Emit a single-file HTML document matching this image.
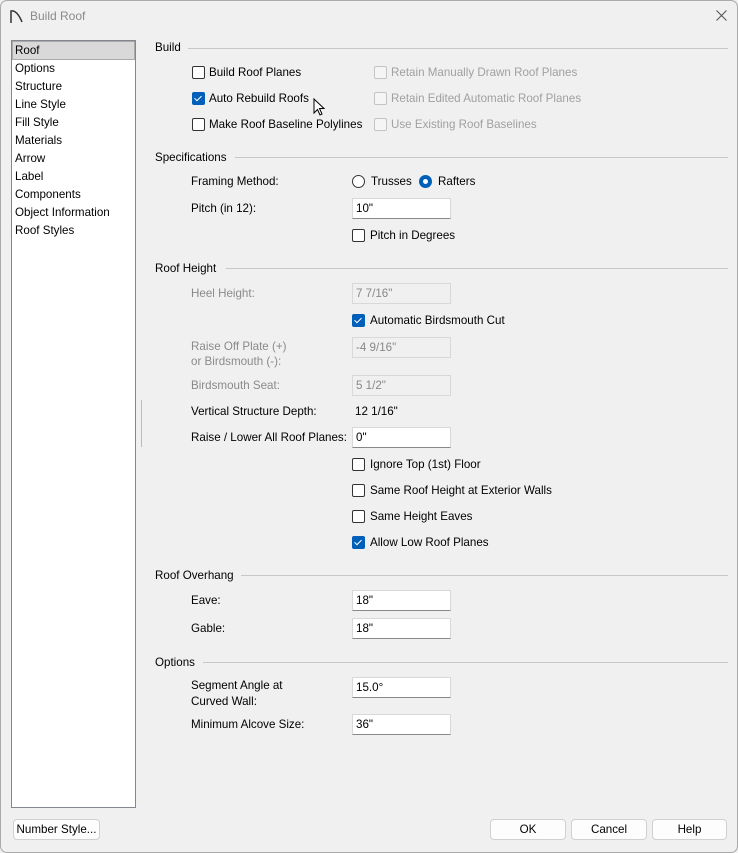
<!DOCTYPE html><html><head><style>
body{margin:0;width:738px;height:853px;background:#f0f0f0;font-family:"Liberation Sans",sans-serif;font-size:11.6px;color:#000;position:relative;overflow:hidden}
.a{position:absolute;white-space:nowrap}
.win{position:absolute;left:0;top:0;width:736px;height:851px;border:1px solid #aaa;border-radius:7px}
.list{position:absolute;left:11px;top:40px;width:123px;height:766px;background:#fff;border:1px solid #828790}
.list div{height:18px;line-height:18px;padding-left:3px}
.hd{position:absolute;left:155px;height:1px;background:#c8c8c8;}
.cb{position:absolute;width:11px;height:11px;border:1px solid #333;border-radius:2px;background:#fff}
.cb.on{background:#005fb8;border-color:#005fb8}
.cb.on:after{content:"";position:absolute;left:3px;top:1px;width:3px;height:6px;border:solid #fff;border-width:0 1.5px 1.5px 0;transform:rotate(45deg)}
.cb.dis{border-color:#c4c4c4;background:#f5f5f5}
.in{position:absolute;left:352px;width:94px;height:19px;border:1px solid #d8d8d8;border-bottom:1px solid #888;background:#fff;padding-left:3px;line-height:19px}
.in.dis{background:#f0f0f0;border-color:#d8d8d8;color:#888}
.g{color:#8a8a8a}.dg{color:#a0a0a0}
.btn{position:absolute;top:819px;height:19px;border:1px solid #d0d0d0;border-radius:4px;background:#fdfdfd;text-align:center;line-height:19px}
</style></head><body>
<div class="win"></div>
<svg class="a" style="left:9px;top:8px" width="16" height="16"><path d="M2 15 V3 Q8 2 13 14" fill="none" stroke="#333" stroke-width="1.5"/></svg>
<div class="a g" style="left:30px;top:9px;font-size:12px">Build Roof</div>
<svg class="a" style="left:716px;top:10px" width="11" height="11"><path d="M0.5 0.5 L10.5 10.5 M10.5 0.5 L0.5 10.5" stroke="#555" stroke-width="1.1"/></svg>
<div class="list">
<div style="background:#d9d9d9;border:1px solid #aaa;margin:0;height:17px;line-height:17px;padding-left:2px">Roof</div>
<div>Options</div><div>Structure</div><div>Line Style</div><div>Fill Style</div><div>Materials</div><div>Arrow</div><div>Label</div><div>Components</div><div>Object Information</div><div>Roof Styles</div>
</div>
<div class="a" style="left:141px;top:400px;width:1px;height:47px;background:#bbb"></div>

<div class="a" style="left:155px;top:41px">Build</div><div class="hd" style="left:188px;width:540px;top:48px"></div>
<div class="cb" style="left:192px;top:66px"></div><div class="a" style="left:209px;top:66px">Build Roof Planes</div>
<div class="cb on" style="left:192px;top:92px"></div><div class="a" style="left:209px;top:92px">Auto Rebuild Roofs</div>
<svg class="a" style="left:313px;top:98px" width="14" height="20"><path d="M1 1 V15 L4.5 11.5 L7 17 L9 16 L6.5 10.5 H11 Z" fill="#fff" stroke="#000" stroke-width="1"/></svg>
<div class="cb" style="left:192px;top:118px"></div><div class="a" style="left:209px;top:118px">Make Roof Baseline Polylines</div>
<div class="cb dis" style="left:374px;top:66px"></div><div class="a dg" style="left:391px;top:66px">Retain Manually Drawn Roof Planes</div>
<div class="cb dis" style="left:374px;top:92px"></div><div class="a dg" style="left:391px;top:92px">Retain Edited Automatic Roof Planes</div>
<div class="cb dis" style="left:374px;top:118px"></div><div class="a dg" style="left:391px;top:118px">Use Existing Roof Baselines</div>

<div class="a" style="left:155px;top:151px">Specifications</div><div class="hd" style="left:235px;width:493px;top:157px"></div>
<div class="a" style="left:191px;top:175px">Framing Method:</div>
<div class="a" style="left:352px;top:175px;width:11px;height:11px;border:1px solid #333;border-radius:50%;background:#fff"></div><div class="a" style="left:371px;top:175px">Trusses</div>
<div class="a" style="left:419px;top:175px;width:13px;height:13px;border-radius:50%;background:#005fb8"><div style="position:absolute;left:4px;top:4px;width:5px;height:5px;border-radius:50%;background:#fff"></div></div><div class="a" style="left:438px;top:175px">Rafters</div>
<div class="a" style="left:191px;top:202px">Pitch (in 12):</div><div class="in" style="top:198px">10"</div>
<div class="cb" style="left:352px;top:229px"></div><div class="a" style="left:370px;top:229px">Pitch in Degrees</div>

<div class="a" style="left:155px;top:262px">Roof Height</div><div class="hd" style="left:226px;width:502px;top:268px"></div>
<div class="a g" style="left:191px;top:287px">Heel Height:</div><div class="in dis" style="top:283px">7 7/16"</div>
<div class="cb on" style="left:352px;top:314px"></div><div class="a" style="left:370px;top:314px">Automatic Birdsmouth Cut</div>
<div class="a g" style="left:191px;top:339px;line-height:15px">Raise Off Plate (+)<br>or Birdsmouth (-):</div><div class="in dis" style="top:337px">-4 9/16"</div>
<div class="a g" style="left:191px;top:379px">Birdsmouth Seat:</div><div class="in dis" style="top:375px">5 1/2"</div>
<div class="a" style="left:191px;top:405px">Vertical Structure Depth:</div><div class="a" style="left:355px;top:405px">12 1/16"</div>
<div class="a" style="left:191px;top:431px">Raise / Lower All Roof Planes:</div><div class="in" style="top:427px">0"</div>
<div class="cb" style="left:352px;top:458px"></div><div class="a" style="left:370px;top:458px">Ignore Top (1st) Floor</div>
<div class="cb" style="left:352px;top:484px"></div><div class="a" style="left:370px;top:484px">Same Roof Height at Exterior Walls</div>
<div class="cb" style="left:352px;top:510px"></div><div class="a" style="left:370px;top:510px">Same Height Eaves</div>
<div class="cb on" style="left:352px;top:536px"></div><div class="a" style="left:370px;top:536px">Allow Low Roof Planes</div>

<div class="a" style="left:155px;top:569px">Roof Overhang</div><div class="hd" style="left:241px;width:487px;top:575px"></div>
<div class="a" style="left:191px;top:594px">Eave:</div><div class="in" style="top:590px">18"</div>
<div class="a" style="left:191px;top:622px">Gable:</div><div class="in" style="top:618px">18"</div>

<div class="a" style="left:155px;top:656px">Options</div><div class="hd" style="left:203px;width:525px;top:662px"></div>
<div class="a" style="left:191px;top:678px;line-height:16px">Segment Angle at<br>Curved Wall:</div><div class="in" style="top:677px">15.0°</div>
<div class="a" style="left:191px;top:718px">Minimum Alcove Size:</div><div class="in" style="top:714px">36"</div>

<div class="btn" style="left:13px;width:85px">Number Style...</div>
<div class="btn" style="left:490px;width:74px">OK</div>
<div class="btn" style="left:571px;width:74px">Cancel</div>
<div class="btn" style="left:652px;width:73px">Help</div>
</body></html>
